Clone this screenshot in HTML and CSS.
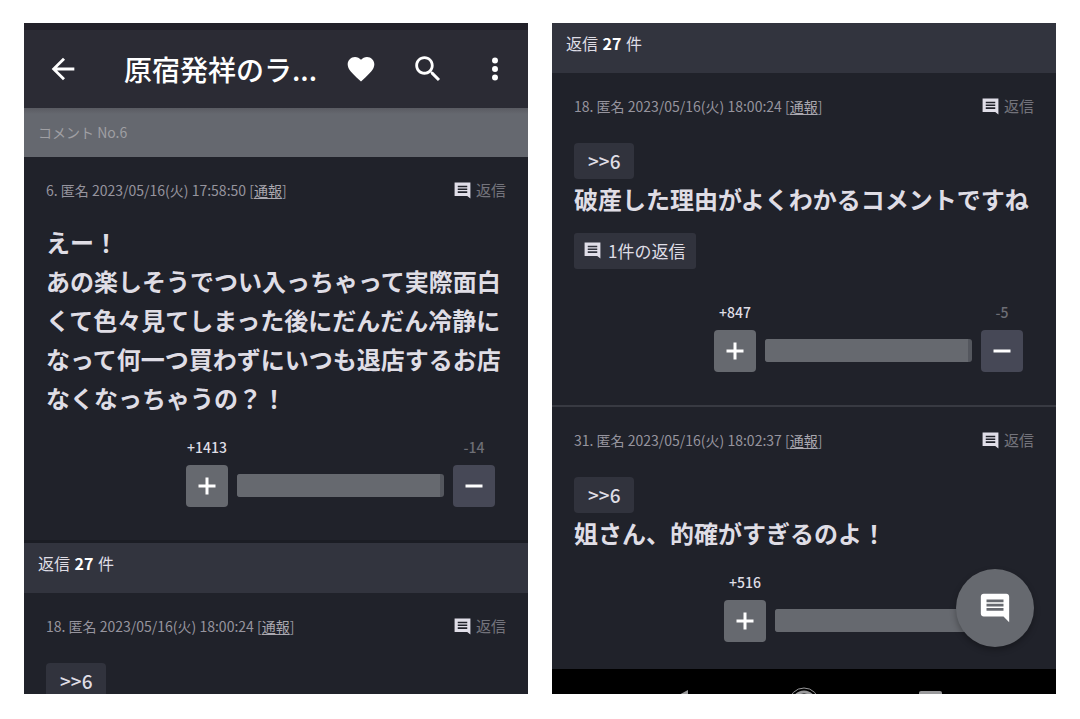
FILE: index.html
```html
<!DOCTYPE html>
<html lang="ja">
<head>
<meta charset="utf-8">
<title>コメント No.6</title>
<meta name="viewport" content="width=device-width, initial-scale=1">
<link rel="stylesheet" href="styles.css">
</head>
<body>
<svg class="sprite" aria-hidden="true">
  <symbol id="comment" viewBox="0 0 24 24"><path d="M21.99 4c0-1.1-.89-2-1.99-2H4c-1.1 0-2 .9-2 2v12c0 1.1.9 2 2 2h14l4 4-.01-18zM18 14H6v-2h12v2zm0-3H6V9h12v2zm0-3H6V6h12v2z"/></symbol>
  <symbol id="comment-small" viewBox="0 0 24 24"><path d="M2 2h20v20l-4-3H2zM6 6v2h12V6zm0 3.500v2h12v-2zM6 13v2h12v-2z"/></symbol>
  <symbol id="plus" viewBox="0 0 24 24"><path d="M10.500 3.500h3v7h7v3h-7v7h-3v-7h-7v-3h7z"/></symbol>
  <symbol id="minus" viewBox="0 0 24 24"><path d="M3.500 10.500h17v3h-17z"/></symbol>
</svg>
<main class="screens">
  <section class="screen">
    <header class="appbar">
      <button class="icon-button" aria-label="戻る"><svg class="icon" viewBox="0 0 24 24"><path d="M20 11H7.83l5.59-5.59L12 4l-8 8 8 8 1.41-1.41L7.83 13H20v-2z"/></svg></button>
      <h1 class="title">原宿発祥のラ...</h1>
      <div class="actions">
        <button class="icon-button" aria-label="お気に入り"><svg class="icon heart" viewBox="0 0 24 24"><path d="M12 21.35l-1.45-1.32C5.4 15.36 2 12.28 2 8.5 2 5.42 4.42 3 7.5 3c1.74 0 3.41.81 4.5 2.09C13.09 3.81 14.76 3 16.5 3 19.58 3 22 5.42 22 8.5c0 3.78-3.4 6.86-8.55 11.54L12 21.35z"/></svg></button>
        <button class="icon-button" aria-label="検索"><svg class="icon" viewBox="0 0 24 24"><path d="M15.5 14h-.79l-.28-.27C15.41 12.59 16 11.11 16 9.5 16 5.91 13.09 3 9.5 3S3 5.91 3 9.5 5.91 16 9.5 16c1.61 0 3.09-.59 4.23-1.57l.27.28v.79l5 4.99L20.49 19l-4.99-5zm-6 0C7.01 14 5 11.99 5 9.5S7.01 5 9.5 5 14 7.01 14 9.5 11.99 14 9.5 14z"/></svg></button>
        <button class="icon-button" aria-label="メニュー"><svg class="icon" viewBox="0 0 24 24"><circle cx="12" cy="6" r="2.100"/><circle cx="12" cy="12" r="2.100"/><circle cx="12" cy="18" r="2.100"/></svg></button>
      </div>
    </header>
    <div class="comment-number">コメント No.6</div>
    <article class="comment inset-votes">
      <div class="meta">
        <span>6. 匿名 2023/05/16(火) 17:58:50 [<a href="#">通報</a>]</span>
        <button class="reply"><svg class="small-icon"><use href="#comment-small"/></svg>返信</button>
      </div>
      <div class="body">えー！<br>あの楽しそうでつい入っちゃって実際面白くて色々見てしまった後にだんだん冷静になって何一つ買わずにいつも退店するお店なくなっちゃうの？！</div>
      <div class="votes">
        <div class="vote"><span class="count">+1413</span><button class="vote-button" aria-label="プラス"><svg><use href="#plus"/></svg></button></div>
        <div class="bar"><div class="bar-fill" style="width: 98%"></div></div>
        <div class="vote"><span class="count muted">-14</span><button class="vote-button down" aria-label="マイナス"><svg><use href="#minus"/></svg></button></div>
      </div>
    </article>
    <h2 class="replies-heading divided">返信 <b>27</b> 件</h2>
    <article class="comment">
      <div class="meta">
        <span>18. 匿名 2023/05/16(火) 18:00:24 [<a href="#">通報</a>]</span>
        <button class="reply"><svg class="small-icon"><use href="#comment-small"/></svg>返信</button>
      </div>
      <div class="body"><a class="quote" href="#">&gt;&gt;6</a></div>
    </article>
  </section>

  <section class="screen">
    <h2 class="replies-heading">返信 <b>27</b> 件</h2>
    <article class="comment inset-votes">
      <div class="meta">
        <span>18. 匿名 2023/05/16(火) 18:00:24 [<a href="#">通報</a>]</span>
        <button class="reply"><svg class="small-icon"><use href="#comment-small"/></svg>返信</button>
      </div>
      <div class="body"><a class="quote" href="#">&gt;&gt;6</a>破産した理由がよくわかるコメントですね</div>
      <button class="thread"><svg class="small-icon"><use href="#comment-small"/></svg>1件の返信</button>
      <div class="votes">
        <div class="vote"><span class="count">+847</span><button class="vote-button" aria-label="プラス"><svg><use href="#plus"/></svg></button></div>
        <div class="bar"><div class="bar-fill" style="width: 98%"></div></div>
        <div class="vote"><span class="count muted">-5</span><button class="vote-button down" aria-label="マイナス"><svg><use href="#minus"/></svg></button></div>
      </div>
    </article>
    <article class="comment ruled">
      <div class="meta">
        <span>31. 匿名 2023/05/16(火) 18:02:37 [<a href="#">通報</a>]</span>
        <button class="reply"><svg class="small-icon"><use href="#comment-small"/></svg>返信</button>
      </div>
      <div class="body"><a class="quote" href="#">&gt;&gt;6</a>姐さん、的確がすぎるのよ！</div>
      <div class="votes">
        <div class="vote"><span class="count">+516</span><button class="vote-button" aria-label="プラス"><svg><use href="#plus"/></svg></button></div>
        <div class="bar"><div class="bar-fill" style="width: 99%"></div></div>
      </div>
    </article>
    <button class="fab" aria-label="コメントする"><svg class="icon"><use href="#comment"/></svg></button>
    <nav class="system-nav" aria-label="システム">
      <svg viewBox="0 0 32 32"><path d="M25 3v26L1 16z"/></svg>
      <svg viewBox="0 0 32 32"><circle class="ring" cx="16" cy="16" r="15"/><circle class="disc" cx="16" cy="16" r="11"/></svg>
      <svg viewBox="0 0 32 32"><rect x="6" y="4" width="23" height="23" rx="2"/></svg>
    </nav>
  </section>
</main>
</body>
</html>
```
FILE: styles.css
```css
* { box-sizing: border-box; }

body {
  margin: 0;
  background: #fff;
  color: #dfdde5;
  font-family: "Noto Sans CJK JP", sans-serif;
}

button {
  border: 0;
  padding: 0;
  background: none;
  color: inherit;
  font: inherit;
  cursor: pointer;
}

svg { display: block; fill: currentColor; }
.sprite { position: absolute; width: 0; height: 0; }

.screens {
  display: grid;
  grid-template-columns: 1fr 1fr;
  gap: 24px;
  height: 100vh;
  padding: 23px 24px 25px;
}

.screen {
  position: relative;
  min-width: 0;
  overflow: hidden;
  background: #20222a;
}

.appbar {
  display: flex;
  align-items: center;
  gap: 20px;
  padding: 22px 16px 22px 22px;
  border-top: 7px solid #222129;
  background: #2b2b34;
  color: #fff;
}
.icon { width: 34px; height: 34px; }
.heart { width: 32px; height: 32px; }
.icon-button {
  display: grid;
  place-items: center;
  width: 34px;
  height: 34px;
}
.title {
  flex: 1;
  min-width: 0;
  margin: 0;
  padding-left: 24px;
  font-size: 28px;
  font-weight: 500;
  line-height: 34px;
  white-space: nowrap;
}
.actions { display: flex; gap: 33px; }

.comment-number {
  padding: 12px 14px 13px;
  background: linear-gradient(#5a5b62, #65686f 6px);
  color: #9f9fa3;
  font-size: 14px;
  line-height: 24px;
}

.replies-heading {
  margin: 0;
  padding: 8px 14px 18px;
  background: #32343e;
  font-size: 16px;
  font-weight: 400;
  line-height: 24px;
}
.replies-heading.divided { border-top: 3px solid #1b1d24; }
.replies-heading b { margin: 0 1px; color: #fff; }

.comment { padding: 21px 22px 33px; }
.comment.ruled { border-top: 2px solid #383a42; }

.meta {
  display: flex;
  justify-content: space-between;
  color: #96949e;
  font-size: 14px;
  line-height: 24px;
}
.meta a { color: #aaa8b0; text-underline-offset: 2px; }
.reply {
  display: flex;
  align-items: center;
  gap: 4px;
  color: #74747c;
  font-size: 15px;
}
.small-icon { width: 19px; height: 19px; color: #e0dee8; }

.body {
  margin-top: 20px;
  font-size: 24px;
  font-weight: 700;
  line-height: 39px;
}
.quote {
  display: block;
  width: max-content;
  margin-top: 25px;
  padding: 0 13px 0 14px;
  border-radius: 4px;
  background: #31333d;
  color: inherit;
  font-size: 19px;
  font-weight: 500;
  line-height: 36px;
  text-decoration: none;
}
.body:has(.quote) { margin-top: 0; }

.thread {
  display: flex;
  align-items: center;
  gap: 6px;
  margin: 15px 0 33px;
  padding: 0 11px 1px 9px;
  border-radius: 3px;
  background: #31333d;
  font-size: 17px;
  line-height: 35px;
}

.votes {
  display: flex;
  align-items: flex-end;
  justify-content: flex-end;
  gap: 9px;
  margin-top: 20px;
}
.inset-votes .votes { margin-right: 11px; }
.vote {
  display: flex;
  flex-direction: column;
  align-items: center;
  gap: 8px;
  width: 42px;
}
.count {
  font-size: 14px;
  font-weight: 500;
  line-height: 20px;
}
.count.muted { color: #6d6e75; }
.vote-button {
  display: grid;
  place-items: center;
  width: 42px;
  height: 42px;
  border-radius: 4px;
  background: #66696f;
  color: #fff;
}
.vote-button.down { background: #464856; }
.vote-button svg { width: 24px; height: 24px; }
.bar {
  width: 207px;
  height: 23px;
  margin-bottom: 10px;
  border-radius: 3px;
  overflow: hidden;
  background: #54575e;
}
.bar-fill { height: 100%; background: #66696f; }
/* The end of this track stays underneath the floating button. */
.ruled .bar { width: 207px; margin-right: 52px; }

.fab {
  position: absolute;
  right: 22px;
  bottom: 47px;
  display: grid;
  place-items: center;
  width: 78px;
  height: 78px;
  border-radius: 50%;
  background: #66696f;
  color: #fff;
  box-shadow: 0 3px 6px rgba(0, 0, 0, 0.3);
}

.system-nav {
  position: absolute;
  right: 0;
  bottom: 0;
  left: 0;
  display: flex;
  justify-content: center;
  gap: 93px;
  height: 25px;
  padding-top: 18px;
  overflow: hidden;
  background: #000;
  color: #99999b;
}
.system-nav svg { flex: none; width: 32px; height: 32px; }
.system-nav .ring { fill: none; stroke: currentColor; stroke-width: 1; }
.system-nav .disc { fill: none; stroke: currentColor; stroke-width: 3; }
```
